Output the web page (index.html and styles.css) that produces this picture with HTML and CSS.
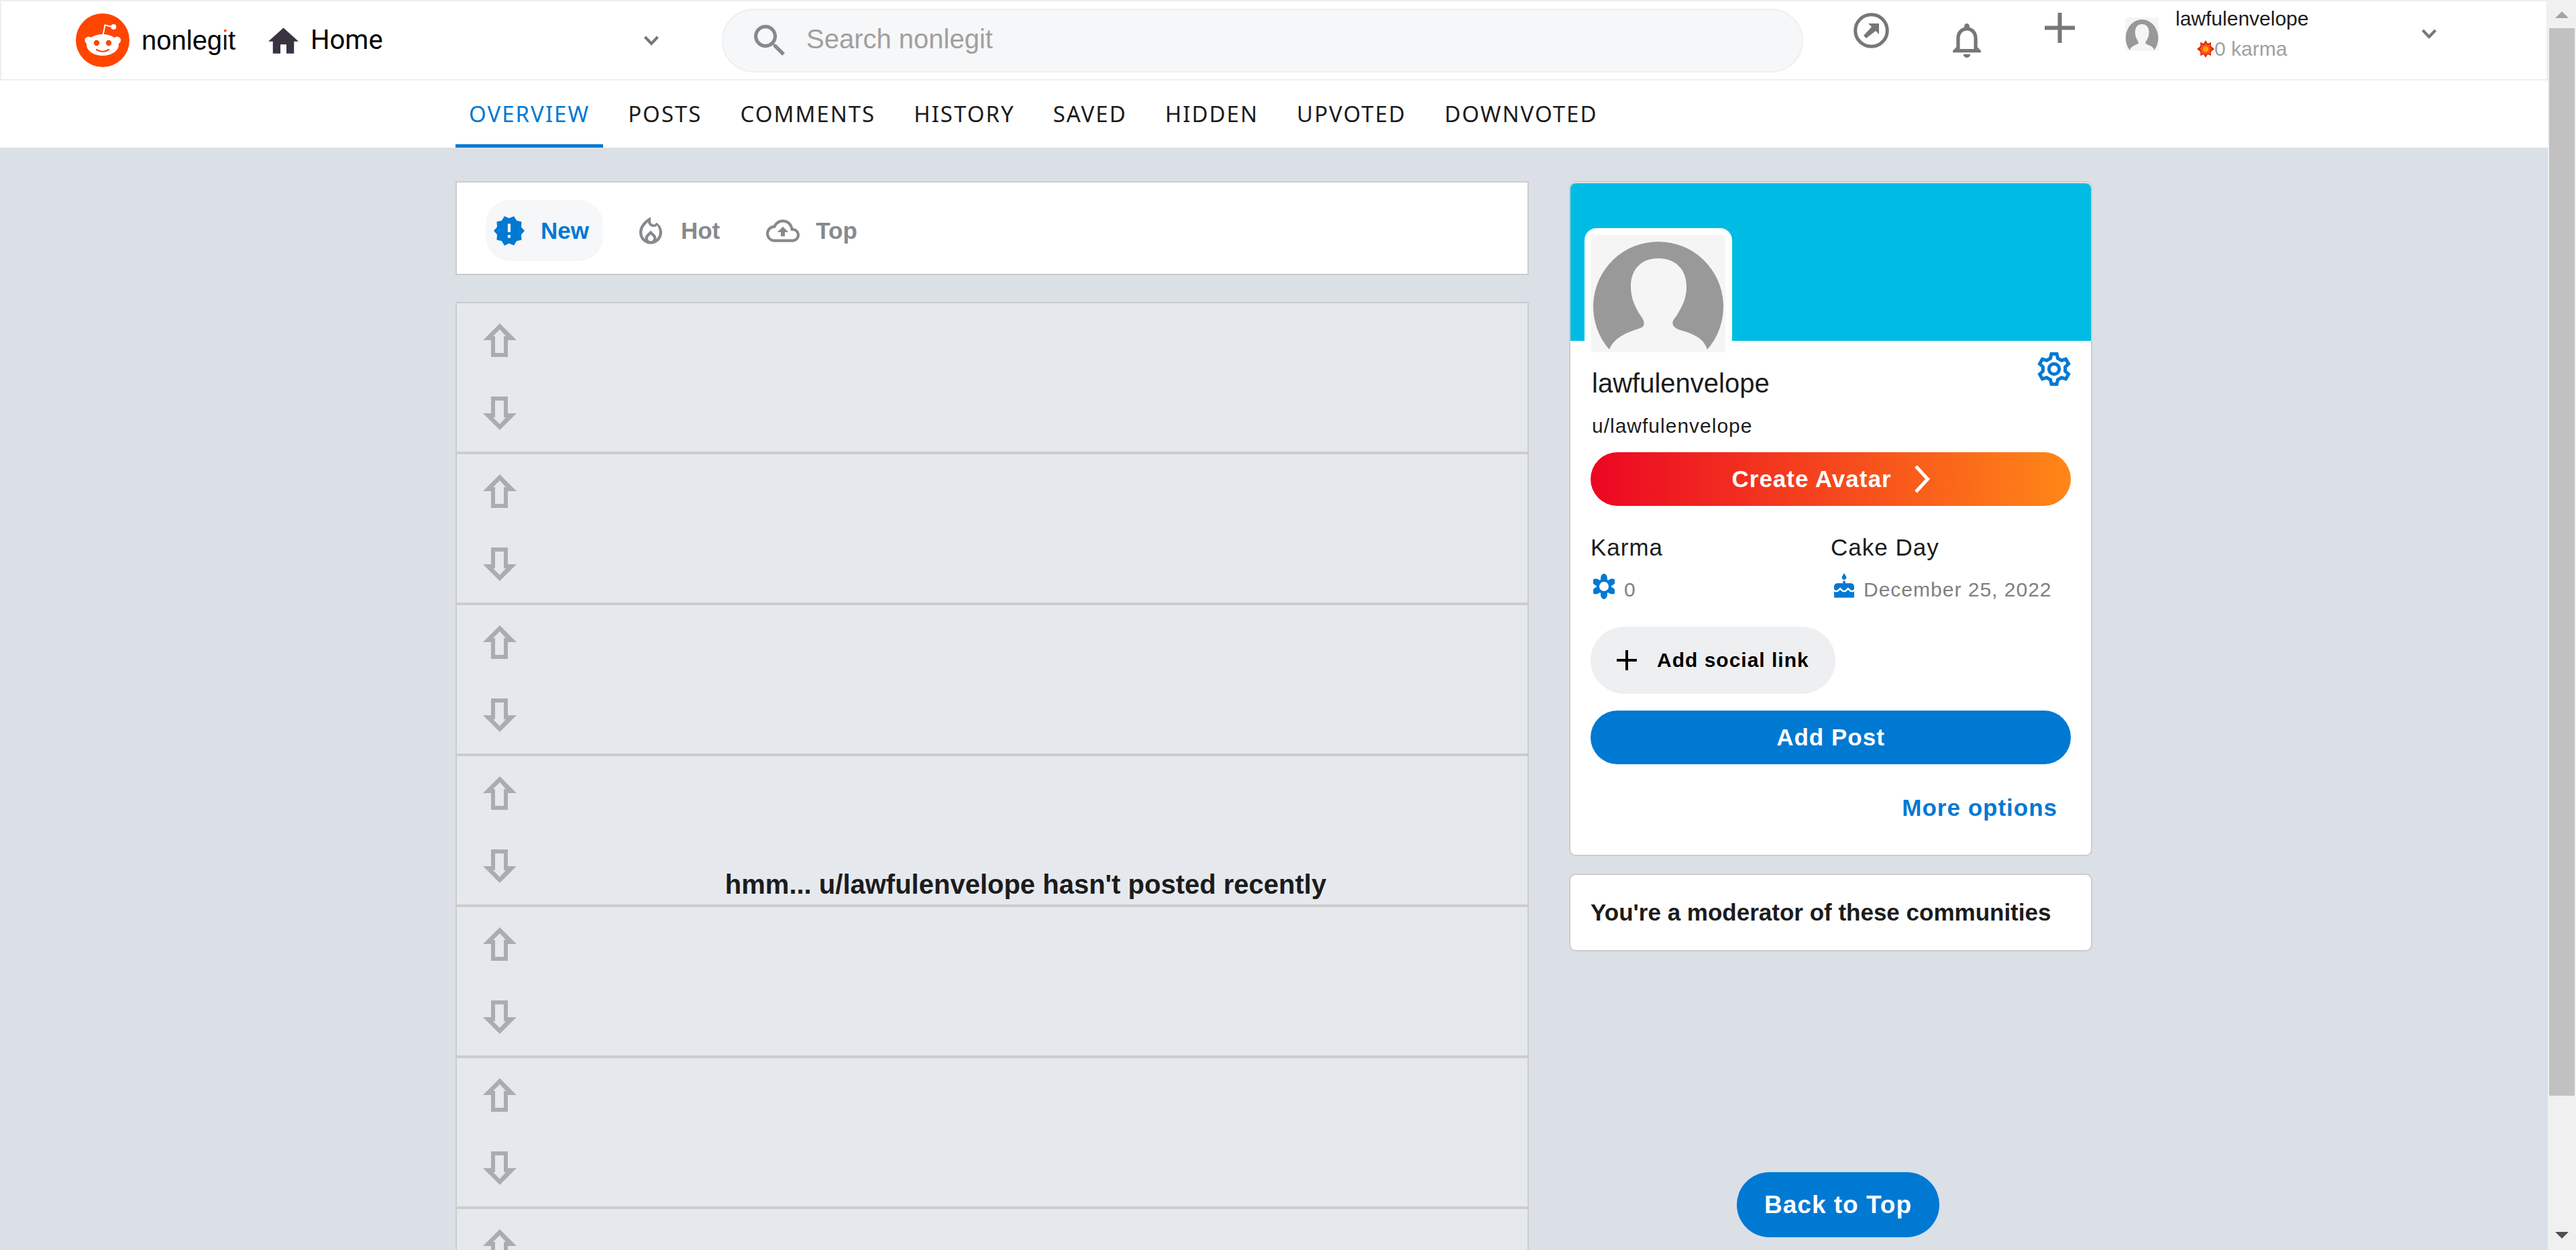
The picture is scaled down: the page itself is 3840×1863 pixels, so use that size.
FILE: index.html
```html
<!DOCTYPE html>
<html lang="en">
<head>
<meta charset="utf-8">
<title>nonlegit - lawfulenvelope</title>
<link rel="stylesheet" href="styles.css">
</head>
<body>
<svg class="sprite" aria-hidden="true">
  <symbol id="up" viewBox="0 0 50 50"><path fill-rule="evenodd" d="M25 0 50 25H37V50H12V25H0ZM25 9 15 19H18V44H31V19H34Z"/></symbol>
  <symbol id="chevron" viewBox="0 0 24 15"><path d="M2.500 2 12 12 21.500 2" fill="none" stroke="currentColor" stroke-width="4"/></symbol>
  <symbol id="person" viewBox="0 0 200 175"><path d="M0 0H200V175H0Z" fill="#f5f5f5"/><path fill="#999" d="M27 171A97 97 0 1 1 173 171C167 153 153 148 130 141C119 136 119 130 127 121C136 106 142 95 142 77C142 50 124 35 100 35C76 35 59 50 59 77C59 95 66 109 74 121C80 129 81 136 73 139C48 147 33 155 27 171Z"/></symbol>
</svg>
<div class="window">
<div class="page">
  <header class="header">
    <a class="logo" href="#">
      <svg class="logo-mark" viewBox="0 0 80 80" aria-hidden="true">
        <circle cx="40" cy="40" r="40" fill="#ff4500"/>
        <path d="M40.500 32 43.500 17.500 55 20" fill="none" stroke="#fff" stroke-width="2"/>
        <g fill="#fff"><circle cx="56.300" cy="20" r="4"/><circle cx="19" cy="40" r="5.600"/><circle cx="61.500" cy="40" r="5.600"/><ellipse cx="40" cy="47" rx="24" ry="16"/></g>
        <g fill="#ff4500"><circle cx="31" cy="44" r="4.200"/><circle cx="49" cy="44" r="4.200"/></g>
        <path d="M31 54Q40 60 49 54" fill="none" stroke="#ff4500" stroke-width="2.200" stroke-linecap="round"/>
      </svg>
      <span class="wordmark">nonleg<span class="dotted">i</span>t</span>
    </a>
    <button class="home-menu" type="button">
      <svg class="home-icon" viewBox="2 3 20 17" aria-hidden="true"><path d="M10 20v-6h4v6h5v-8h3L12 3 2 12h3v8z"/></svg>
      <span>Home</span>
      <svg class="chevron"><use href="#chevron"/></svg>
    </button>
    <form class="search" role="search">
      <svg class="search-icon" viewBox="3 3 17.500 17.500" aria-hidden="true"><path d="M15.500 14h-.79l-.28-.27C15.410 12.590 16 11.110 16 9.500 16 5.910 13.090 3 9.500 3S3 5.910 3 9.500 5.910 16 9.500 16c1.610 0 3.090-.59 4.230-1.570l.27.28v.79l5 4.990L20.490 19l-4.990-5zm-6 0C7.010 14 5 11.990 5 9.500S7.010 5 9.500 5 14 7.010 14 9.500 11.990 14 9.500 14z"/></svg>
      <input type="search" aria-label="Search nonlegit" placeholder="Search nonlegit">
    </form>
    <div class="actions">
      <button type="button" aria-label="Popular"><svg class="popular" viewBox="0 0 53 53"><circle cx="26.500" cy="26.500" r="23.800" fill="none" stroke="currentColor" stroke-width="5"/><path d="M22 16H38V32L33 27 19 38 15 34 27 21Z"/></svg></button>
      <button class="bell-button" type="button" aria-label="Notifications"><svg class="bell" viewBox="4 2.500 16 19.500"><path d="M12 22c1.100 0 2-.9 2-2h-4c0 1.100.9 2 2 2zm6-6v-5c0-3.070-1.630-5.640-4.500-6.320V4c0-.83-.67-1.500-1.500-1.500s-1.500.67-1.500 1.500v.68C7.640 5.360 6 7.920 6 11v5l-2 2v1h16v-1l-2-2zm-2 1H8v-6c0-2.480 1.510-4.500 4-4.500s4 2.020 4 4.500v6z"/></svg></button>
      <button type="button" aria-label="Create post"><svg class="plus" viewBox="0 0 45 45"><path d="M19.500 0H25.500V19.500H45V25.500H25.500V45H19.500V25.500H0V19.500H19.500Z"/></svg></button>
    </div>
    <button class="user" type="button">
      <svg class="user-avatar" preserveAspectRatio="none" viewBox="0 0 200 175"><use href="#person" width="200" height="175"/></svg>
      <span class="user-text">
        <span>lawfulenvelope</span>
        <span class="user-karma"><svg class="burst" viewBox="-13 -13 26 26"><path fill="#e8200c" d="M0-13 3-8 8-10 8-4 13 0 8 4 8 10 3 8 0 13-3 8-8 10-8 4-13 0-8-4-8-10-3-8Z"/><path fill="#ff5a12" d="M0-9 3-5 8-8 6-3 9 0 6 3 8 8 3 6 0 9-3 6-8 8-6 3-9 0-6-3-8-8-3-5Z"/><circle r="4" fill="#ffa31a"/></svg>0 karma</span>
      </span>
      <svg class="chevron"><use href="#chevron"/></svg>
    </button>
  </header>
  <nav class="tabs">
    <a class="active" href="#">OVERVIEW</a>
    <a href="#">POSTS</a>
    <a href="#">COMMENTS</a>
    <a href="#">HISTORY</a>
    <a href="#">SAVED</a>
    <a href="#">HIDDEN</a>
    <a href="#">UPVOTED</a>
    <a href="#">DOWNVOTED</a>
  </nav>
  <div class="columns">
    <main class="feed">
      <div class="sort">
        <button class="active" type="button"><svg class="new" viewBox="1 1 22 22"><path d="m23 12-2.440-2.780.34-3.680-3.610-.82-1.890-3.180L12 3 8.600 1.540 6.710 4.720l-3.610.81.34 3.680L1 12l2.440 2.780-.34 3.690 3.610.82 1.890 3.180L12 21l3.400 1.460 1.890-3.180 3.610-.82-.34-3.680L23 12zm-10 5h-2v-2h2v2zm0-4h-2V7h2v6z"/></svg>New</button>
        <button type="button"><svg class="hot" viewBox="4 2 16 19"><path d="M16 6l-.44.55C14.380 8.020 12 7.190 12 5.300V2S4 6 4 13c0 4.420 3.580 8 8 8s8-3.580 8-8c0-2.960-1.610-5.620-4-7zm-4 13c-1.100 0-2-.87-2-1.940 0-.51.2-.99.58-1.360l1.420-1.400 1.430 1.400c.37.37.57.85.57 1.360 0 1.070-.9 1.940-2 1.940zm3.960-1.500c.04-.36.22-1.890-1.130-3.220L12 11.500l-2.830 2.780C7.810 15.620 8 17.160 8.040 17.500A5.965 5.965 0 0 1 6 13c0-3.160 2.130-5.650 4.030-7.250a3.996 3.996 0 0 0 6.640 2.190C17.300 9.080 18 11.070 18 13c0 1.790-.8 3.400-2.040 4.500z"/></svg>Hot</button>
        <button type="button"><svg class="top" viewBox="0 4 24 16"><path d="M19.350 10.040C18.670 6.590 15.640 4 12 4 9.110 4 6.600 5.640 5.350 8.040 2.340 8.360 0 10.910 0 14c0 3.310 2.690 6 6 6h13c2.760 0 5-2.240 5-5 0-2.640-2.050-4.780-4.650-4.960zM19 18H6c-2.210 0-4-1.790-4-4 0-2.050 1.530-3.760 3.560-3.970l1.070-.11.5-.95C8.080 7.140 9.940 6 12 6c2.620 0 4.880 1.860 5.390 4.430l.3 1.500 1.530.11c1.560.1 2.780 1.410 2.780 2.960 0 1.650-1.350 3-3 3zM8 13h2.550v3h2.900v-3H16l-4-4z"/></svg>Top</button>
      </div>
      <div class="posts">
        <div class="post"><svg><use href="#up"/></svg><svg class="down"><use href="#up"/></svg></div>
        <div class="post"><svg><use href="#up"/></svg><svg class="down"><use href="#up"/></svg></div>
        <div class="post"><svg><use href="#up"/></svg><svg class="down"><use href="#up"/></svg></div>
        <div class="post"><svg><use href="#up"/></svg><svg class="down"><use href="#up"/></svg></div>
        <div class="post"><svg><use href="#up"/></svg><svg class="down"><use href="#up"/></svg></div>
        <div class="post"><svg><use href="#up"/></svg><svg class="down"><use href="#up"/></svg></div>
        <div class="post"><svg><use href="#up"/></svg><svg class="down"><use href="#up"/></svg></div>
        <p class="empty">hmm... u/lawfulenvelope hasn't posted recently</p>
      </div>
    </main>
    <aside class="sidebar">
      <section class="card profile">
        <div class="banner"></div>
        <svg class="profile-avatar"><use href="#person"/></svg>
        <div class="profile-body">
          <div class="names">
            <div>
              <h1>lawfulenvelope</h1>
              <p>u/lawfulenvelope</p>
            </div>
            <button class="settings" type="button" aria-label="Settings"><svg viewBox="-25 -25 50 50"><g fill="none" stroke="currentColor" stroke-width="5"><path d="M-4-22.500H4L5.500-16 11.100-12.800 17.500-14.700 21.500-7.800 16.600-3.200V3.200L21.500 7.800 17.500 14.700 11.100 12.800 5.500 16 4 22.500H-4L-5.500 16-11.100 12.800-17.500 14.700-21.500 7.800-16.600 3.200V-3.200L-21.500-7.800-17.500-14.700-11.100-12.800-5.500-16Z"/><circle r="7.700"/></g></svg></button>
          </div>
          <button class="pill avatar-button" type="button">Create Avatar<svg viewBox="0 0 24 42"><path d="M3 2 20.500 21 3 40" fill="none" stroke="currentColor" stroke-width="5"/></svg></button>
          <dl class="stats">
            <div>
              <dt>Karma</dt>
              <dd><svg class="flower" viewBox="-16 -19 32 38"><g><ellipse cy="-12" rx="5" ry="7"/><ellipse cy="-12" rx="5" ry="7" transform="rotate(60)"/><ellipse cy="-12" rx="5" ry="7" transform="rotate(120)"/><ellipse cy="-12" rx="5" ry="7" transform="rotate(180)"/><ellipse cy="-12" rx="5" ry="7" transform="rotate(240)"/><ellipse cy="-12" rx="5" ry="7" transform="rotate(300)"/></g><circle r="9" fill="none" stroke="currentColor" stroke-width="4"/><circle r="7" fill="#fff"/></svg>0</dd>
            </div>
            <div>
              <dt>Cake Day</dt>
              <dd><svg class="cake" viewBox="3 0 18 22"><path d="M12 6c1.110 0 2-.9 2-2 0-.38-.1-.73-.29-1.030L12 0l-1.710 2.970c-.19.3-.29.65-.29 1.030 0 1.100.9 2 2 2zm4.600 9.990-1.070-1.070-1.080 1.070c-1.300 1.300-3.580 1.310-4.890 0l-1.070-1.070-1.090 1.070C6.750 16.640 5.880 17 4.960 17c-.73 0-1.400-.23-1.960-.61V21c0 .55.45 1 1 1h16c.55 0 1-.45 1-1v-4.610c-.56.38-1.230.61-1.960.61-.92 0-1.790-.36-2.440-1.010zM18 9h-5V7h-2v2H6c-1.660 0-3 1.340-3 3v1.540c0 1.080.88 1.960 1.960 1.960.52 0 1.020-.2 1.380-.57l2.140-2.130 2.130 2.130c.74.74 2.030.74 2.770 0l2.140-2.130 2.130 2.130c.37.37.86.57 1.380.57 1.080 0 1.960-.88 1.960-1.960V12C21 10.340 19.660 9 18 9z"/></svg>December 25, 2022</dd>
            </div>
          </dl>
          <button class="social" type="button"><svg viewBox="0 0 30 30"><path d="M13 0H17V13H30V17H17V30H13V17H0V13H13Z"/></svg>Add social link</button>
          <button class="pill post-button" type="button">Add Post</button>
          <a class="more" href="#">More options</a>
        </div>
      </section>
      <section class="card moderator"><h2>You're a moderator of these communities</h2></section>
      <button class="to-top" type="button">Back to Top</button>
    </aside>
  </div>
</div>
<div class="scrollbar" aria-hidden="true"><span class="arrow-up"></span><span class="thumb"></span><span class="arrow-down"></span></div>
</div>
</body>
</html>
```
FILE: styles.css
```css
* { box-sizing: border-box; }
body, h1, h2, p, dl, dd { margin: 0; }
body {
  background: #dae0e6;
  color: #1c1c1c;
  font-family: "Liberation Sans", Arial, sans-serif;
  font-size: 30px;
  line-height: 40px;
}
button {
  border: 0;
  padding: 0;
  background: none;
  color: inherit;
  font: inherit;
  cursor: pointer;
}
a { color: inherit; text-decoration: none; }
svg { display: block; flex: none; fill: currentColor; }
.sprite { position: absolute; width: 0; height: 0; }

.window {
  display: grid;
  grid-template-columns: 1fr 42px;
  grid-template-rows: 100vh;
  height: 100vh;
  overflow: hidden;
}
.page { min-width: 0; }

/* Header */
.header {
  display: flex;
  align-items: center;
  height: 120px;
  padding: 0 163px 0 111px;
  border: 2px solid #eee;
  background: #fff;
}
.logo { display: flex; align-items: center; gap: 18px; width: 287px; flex: none; }
.logo-mark { width: 80px; height: 80px; }
.wordmark {
  color: #000;
  font-size: 40px;
  line-height: 60px;
}
.dotted {
  background: linear-gradient(#ff4500 13px, #1c1c1c 13px);
  background-clip: text;
  color: transparent;
}
.home-menu {
  display: flex;
  align-items: center;
  gap: 18px;
  width: 583px;
  flex: none;
  color: #000;
  font-family: Roboto, sans-serif;
  font-size: 40px;
}
.home-icon { width: 45px; height: 39px; color: #373340; }
.chevron { width: 24px; height: 15px; margin-left: auto; color: #777; }
.search {
  display: flex;
  align-items: center;
  flex: 1;
  min-width: 0;
  height: 95px;
  margin-left: 93px;
  padding: 0 46px;
  gap: 32px;
  border: 2px solid #edeff1;
  border-radius: 48px;
  background: #f6f7f8;
}
.search-icon { width: 46px; height: 46px; color: #878a8c; }
.search input {
  flex: 1;
  min-width: 0;
  padding: 0 0 4px;
  border: 0;
  outline: 0;
  background: none;
  font: inherit;
  font-size: 40px;
}
.search input::placeholder { color: #a0a0a0; opacity: 1; }
.actions {
  display: flex;
  align-items: flex-start;
  align-self: flex-start;
  gap: 95px;
  padding: 17px 75px 0;
  color: #777;
}
.bell-button { padding-top: 16px; }
.popular { width: 53px; height: 53px; }
.bell { width: 42px; height: 51px; }
.plus { width: 45px; height: 45px; }
.user {
  display: flex;
  align-self: flex-start;
  align-items: center;
  gap: 25px;
  width: 465px;
  flex: none;
  padding-top: 6px;
}
.user-avatar { width: 50px; height: 50px; }
.user-text { display: flex; flex-direction: column; align-items: center; gap: 5px; }
.user-karma { display: flex; align-items: center; color: #a0a0a0; }
.burst { width: 26px; height: 26px; }

/* Tabs */
.tabs {
  display: flex;
  gap: 17px;
  height: 100px;
  padding-left: calc((100% - 2440px) / 2);
  background: #fff;
  font-family: "Noto Sans", sans-serif;
  font-size: 33px;
  letter-spacing: 2px;
}
.tabs a { padding: 30px 20px 25px; border-bottom: 5px solid transparent; }
.tabs .active { border-color: #0079d3; color: #0079d3; }

/* Columns */
.columns {
  display: grid;
  grid-template-columns: 1fr 780px;
  gap: 60px;
  max-width: 2440px;
  margin: 0 auto;
  padding-top: 50px;
}
.sort {
  display: flex;
  align-items: center;
  gap: 30px;
  height: 140px;
  margin-bottom: 40px;
  padding: 7px 0 0 43px;
  border: 2px solid #ccc;
  background: #fff;
  color: #878a8c;
  font-size: 35px;
  font-weight: 700;
}
.sort button {
  display: flex;
  align-items: center;
  gap: 24px;
  height: 91px;
  padding: 0 21px 0 12px;
  border-radius: 36px;
}
.sort .active { background: #f6f7f8; color: #0079d3; }
.sort svg { height: 46px; }
.new { width: 46px; }
.sort .hot { width: 34px; height: 41px; margin: 0 4px 0 12px; }
.sort .top { width: 50px; height: 34px; margin-left: 6px; }

.posts { position: relative; }
.post {
  display: flex;
  flex-direction: column;
  gap: 59px;
  height: 225px;
  padding: 30px 39px;
  border: 2px solid #ccc;
  background: #e5e9ee;
  color: #a9adaf;
}
.post svg { width: 50px; height: 50px; }
.down { transform: scaleY(-1); }
.empty {
  position: absolute;
  top: 843px;
  right: 0;
  left: 100px;
  font-size: 40px;
  font-weight: 700;
  line-height: 50px;
  text-align: center;
}

/* Sidebar */
.sidebar {
  display: flex;
  flex-direction: column;
  gap: 26px;
  height: calc(100vh - 270px);
  padding-bottom: 19px;
}
.card { border: 2px solid #ccc; border-radius: 10px; background: #fff; }
.profile { position: relative; padding-top: 1px; }
.banner { height: 235px; border-radius: 8px 8px 0 0; background: #00bce4; }
.profile-avatar {
  position: absolute;
  top: 68px;
  left: 21px;
  width: 220px;
  height: 185px;
  border: 10px solid #fff;
  border-bottom: 0;
  border-radius: 18px 18px 0 0;
  background: #fff;
}
.profile-body {
  display: flex;
  flex-direction: column;
  padding: 17px 30px 50px;
  letter-spacing: 1px;
}
.profile-body button { letter-spacing: inherit; }
.names { display: flex; justify-content: space-between; align-items: flex-start; }
.names h1 { margin: 21px 0 19px; font-size: 40px; font-weight: 400; line-height: 50px; letter-spacing: 0; }
.names h1, .names p { padding-left: 2px; }
.settings { color: #0079d3; }
.settings svg { width: 50px; height: 50px; }
.pill {
  display: flex;
  align-items: center;
  justify-content: center;
  gap: 33px;
  height: 80px;
  border-radius: 40px;
  color: #fff;
  font-size: 35px;
  font-weight: 700;
}
.avatar-button { margin-top: 19px; background: linear-gradient(90deg, #ec0623, #ff8717); }
.avatar-button svg { width: 24px; height: 42px; }
.stats { display: grid; grid-template-columns: 1fr 1fr; margin: 42px 0 35px; }
.stats dt { font-size: 35px; }
.stats dd { display: flex; gap: 14px; margin-top: 23px; color: #808080; }
.stats svg { color: #0079d3; }
.flower { width: 32px; height: 38px; margin: -4px 0 0 4px; }
.cake { width: 30px; height: 37px; margin: -5px 0 0 5px; }
.social {
  display: flex;
  align-items: center;
  align-self: flex-start;
  gap: 30px;
  height: 100px;
  margin-bottom: 25px;
  padding: 0 39px;
  border-radius: 50px;
  background: #edeff1;
  color: #000;
  font-weight: 700;
}
.social svg { width: 30px; height: 30px; }
.post-button { background: #0079d3; }
.more { align-self: flex-end; margin: 45px 20px 0 0; color: #0079d3; font-size: 35px; font-weight: 700; }
.moderator { padding: 36px 30px; }
.moderator h2 { font-size: 35px; line-height: 40px; white-space: nowrap; }
.to-top {
  align-self: flex-start;
  height: 97px;
  margin: auto 0 0 250px;
  padding: 0 41px;
  border-radius: 49px;
  background: #0079d3;
  color: #fff;
  font-size: 37px;
  font-weight: 700;
  letter-spacing: 1px;
}

/* Scrollbar */
.scrollbar {
  display: flex;
  flex-direction: column;
  align-items: center;
  padding: 17px 2px;
  background: #f0f0f0;
}
.arrow-up, .arrow-down { border: 10px solid transparent; }
.arrow-up { border-top: 0; border-bottom-color: #a3a3a3; }
.arrow-down { margin-top: auto; border-bottom: 0; border-top-color: #505050; }
.thumb { width: 38px; height: 87%; margin-top: 15px; background: #c1c1c1; }
```
